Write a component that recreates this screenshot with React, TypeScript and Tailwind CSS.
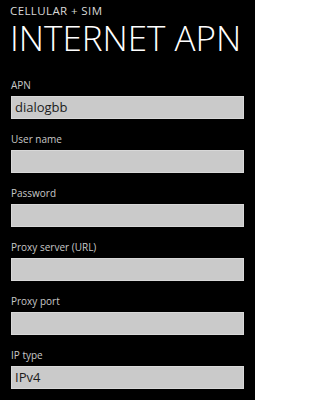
const fields = [
  { label: 'APN', value: 'dialogbb' },
  { label: 'User name', value: '' },
  { label: 'Password', value: '' },
  { label: 'Proxy server (URL)', value: '' },
  { label: 'Proxy port', value: '' },
  { label: 'IP type', value: 'IPv4' },
]

export default function App() {
  return (
    <div
      className="h-[400px] w-[255px] overflow-hidden bg-black text-white"
      style={{ fontFamily: '"Open Sans", "Noto Sans", sans-serif' }}
    >
      <div className="flex flex-col gap-[2px] pl-[10px] pt-[4px]">
        <p className="text-[11.5px] font-medium leading-[14px] tracking-[0.4px] text-[#d8d8d8]">
          CELLULAR + SIM
        </p>
        <h1 className="text-[35px] font-light leading-[35px] text-white">
          INTERNET APN
        </h1>
      </div>

      <div className="mt-[23px] flex flex-col gap-[13px] px-[11px]">
        {fields.map((field) => (
          <div key={field.label} className="flex flex-col gap-[4px]">
            <span className="text-[10px] leading-[14px] text-[#c8c8c8]">
              {field.label}
            </span>
            <div className="flex h-[23px] w-[233px] items-center border border-[#d8d8d8] bg-[#cacaca] pl-[3px]">
              <span className="text-[13px] leading-none text-[#1c1c1c]">
                {field.value}
              </span>
            </div>
          </div>
        ))}
      </div>
    </div>
  )
}
